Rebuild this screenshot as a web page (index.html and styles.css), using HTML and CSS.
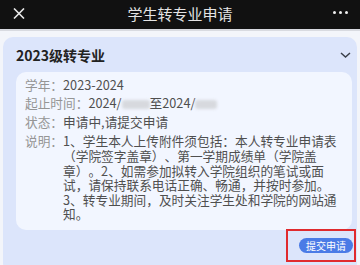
FILE: index.html
```html
<!DOCTYPE html>
<html lang="zh">
<head>
<meta charset="utf-8">
<link rel="stylesheet" href="styles.css">
</head>
<body>
<header class="topbar">
  <svg class="close" width="12" height="11" viewBox="0 0 12 11"><path d="M1 0.5L11 10.5M11 0.5L1 10.5" stroke="#e8e8e8" stroke-width="1.6" fill="none"/></svg>
  <h1 class="title">学生转专业申请</h1>
  <div class="more"><i></i><i></i><i></i></div>
</header>
<main class="card">
  <div class="card-head">
    <h2 class="card-title">2023级转专业</h2>
    <svg class="chev" width="11" height="6" viewBox="0 0 11 6"><path d="M1 1L5.5 5L10 1" stroke="#3a3f4a" stroke-width="1.5" fill="none"/></svg>
  </div>
  <section class="panel">
    <div class="row"><span class="label">学年：</span><span class="value">2023-2024</span></div>
    <div class="row"><span class="label">起止时间：</span><span class="value">2024/<span class="blur b1"></span>至2024/<span class="blur b2"></span></span></div>
    <div class="row"><span class="label">状态：</span><span class="value">申请中,请提交申请</span></div>
    <div class="row"><span class="label">说明：</span><span class="value">1、学生本人上传附件须包括：本人转专业申请表（学院签字盖章）、第一学期成绩单（学院盖章）。2、如需参加拟转入学院组织的笔试或面试，请保持联系电话正确、畅通，并按时参加。3、转专业期间，及时关注学生处和学院的网站通知。</span></div>
  </section>
  <div class="actions">
    <button class="submit">提交申请</button>
    <span class="mark"></span>
  </div>
</main>
</body>
</html>
```
FILE: styles.css
```css
* { box-sizing: border-box; }
html, body { margin: 0; padding: 0; }
body {
  width: 360px;
  height: 265px;
  overflow: hidden;
  background: #f3f5fa;
  font-family: "Noto Sans CJK SC", "Noto Sans", sans-serif;
  text-spacing-trim: space-all;
}
.topbar {
  height: 31px;
  background: #111;
  border-bottom: 2px solid #d8dae0;
  display: flex;
  align-items: center;
  position: relative;
  padding: 0 12px 1px 13px;
}
.close { display: block; margin-top: -2px; }
.title {
  position: absolute;
  left: 0; right: 0; top: 5px;
  margin: 0;
  text-align: center;
  font-size: 15px;
  line-height: 18px;
  font-weight: 400;
  color: #e4e4e4;
  pointer-events: none;
}
.more { margin-left: auto; display: flex; gap: 3px; margin-top: -3px; }
.more i { width: 3px; height: 3px; background: #f0f0f0; border-radius: 50%; display: block; }
.card {
  margin: 6px 3px 0;
  background: #dce5fb;
  border-radius: 10px;
  padding: 0 4px 20px 13px;
}
.card-head {
  height: 35px;
  display: flex;
  align-items: center;
  justify-content: space-between;
  padding-right: 2px;
}
.card-title {
  margin: 0;
  font-size: 14px;
  font-weight: 700;
  color: #222;
  line-height: 18px;
}
.chev { display: block; margin-top: 1px; }
.panel {
  background: #f2f6ff;
  border-radius: 10px;
  margin-right: 1px;
  padding: 5.5px 14px 7.5px 9px;
  font-size: 12.7px;
  line-height: 14.6px;
}
.row { display: flex; margin-top: 4.4px; }
.row:first-child { margin-top: 0; }
.label { flex-shrink: 0; color: #959595; }
.value { color: #4f4f4f; }
.blur {
  display: inline-block;
  height: 9px;
  vertical-align: -1px;
  background: #d7d9de;
  filter: blur(1.5px);
  border-radius: 3px;
}
.b1 { width: 28px; }
.b2 { width: 22px; }
.actions {
  display: flex;
  justify-content: flex-end;
  margin-top: 8px;
  position: relative;
}
.submit {
  border: 0;
  margin: 0;
  height: 15px;
  padding: 0 7px;
  border-radius: 8px;
  background: #4b7be6;
  color: #fff;
  font-family: inherit;
  font-size: 10px;
  line-height: 15px;
}
.mark {
  position: absolute;
  right: -3px;
  top: -9px;
  width: 70px;
  height: 33px;
  border: 2px solid #e02a2e;
}
```
